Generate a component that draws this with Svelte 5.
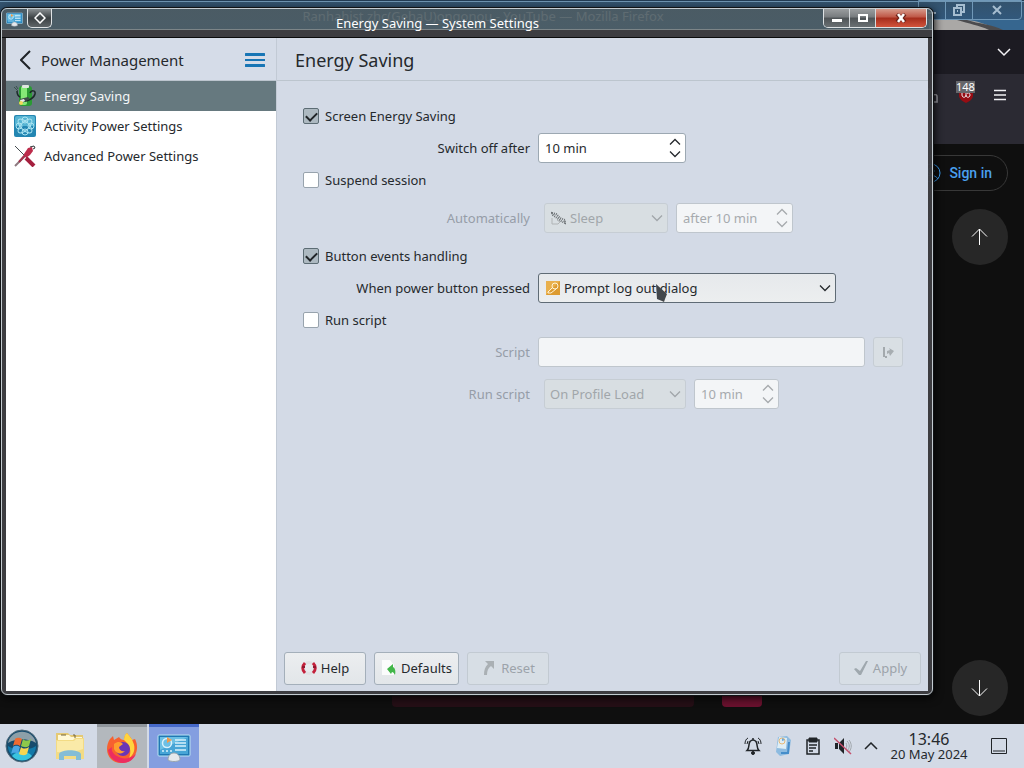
<script lang="ts">
	type Page = 'energy' | 'activity' | 'advanced';

	const pages: { id: Page; label: string }[] = [
		{ id: 'energy', label: 'Energy Saving' },
		{ id: 'activity', label: 'Activity Power Settings' },
		{ id: 'advanced', label: 'Advanced Power Settings' }
	];

	let current: Page = $state('energy');
	let screenSaving = $state(true);
	let suspend = $state(false);
	let buttonEvents = $state(true);
	let runScript = $state(false);
	let minutes = $state(10);
	let suspendMinutes = $state(10);
	let scriptMinutes = $state(10);
</script>

{#snippet chevron()}
	<svg class="chevron" viewBox="0 0 12 8" width="12" height="8" aria-hidden="true"><path d="M1 1.5l5 5 5-5" /></svg>
{/snippet}

{#snippet spin(id: string, text: string, size: string, enabled: boolean, step: (n: number) => void)}
	<div class="spin {size}" class:disabled={!enabled}>
		<input {id} type="text" value={text} disabled={!enabled} />
		<div class="steps">
			<button type="button" aria-label="Increase" disabled={!enabled} onclick={() => step(1)}>
				<svg viewBox="0 0 12 8" width="12" height="8"><path d="M1 6.5l5-5 5 5" /></svg>
			</button>
			<button type="button" aria-label="Decrease" disabled={!enabled} onclick={() => step(-1)}>
				<svg viewBox="0 0 12 8" width="12" height="8"><path d="M1 1.5l5 5 5-5" /></svg>
			</button>
		</div>
	</div>
{/snippet}

{#snippet monitor(size: number)}
	<svg viewBox="0 0 34 28" width={size} height={size} aria-hidden="true">
		<rect x="1" y="1" width="32" height="21" rx="1" fill="#1f78b4" stroke="#b9e2f2" />
		<rect x="3" y="3" width="28" height="17" fill="#47a5d6" />
		<path d="M3 3h28L3 16z" fill="#6cc0e4" />
		<circle cx="10" cy="9" r="4.5" fill="none" stroke="#d8f1fb" stroke-width="1.5" />
		<path d="M10 9V3l5 3z" fill="#f09a4a" />
		<path d="M18 6h11M18 9h11M18 12h11M18 16h11M5 17h2M9 17h2M13 17h2" stroke="#d8f1fb" stroke-width="1.5" />
		<path d="M11 26c0-5 3-7 6-7s6 2 6 7c-3 2-9 2-12 0z" fill="#e4e8ec" stroke="#9aa5ad" />
	</svg>
{/snippet}

<div class="desktop">
	<main class="workspace">
		<section class="browser" aria-label="Mozilla Firefox">
			<div class="browser-title">
				<span>Ranhahist zhc(GehaU)ongonou - YouTube — Mozilla Firefox</span>
				<div class="browser-controls">
					<button aria-label="Minimize"><svg viewBox="0 0 12 12" width="12" height="12"><path d="M2 9h8" /></svg></button>
					<button aria-label="Restore"><svg viewBox="0 0 12 12" width="12" height="12"><path d="M4 3V1h7v7H9M1 4h7v7H1zM4 7h1" /></svg></button>
					<button class="wide" aria-label="Close"><svg viewBox="0 0 12 12" width="12" height="12"><path d="M2 2l8 8M10 2l-8 8" /></svg></button>
				</div>
			</div>
			<div class="persona">
				<svg viewBox="0 0 95 10" width="95" height="10" aria-hidden="true">
					<path d="M0 0h34c14 0 24 5 38 10H0z" fill="#aaa8a6" />
					<path d="M28 0h10c12 4 24 4 36 10H60C50 5 40 4 28 0z" fill="#4b4b4e" />
				</svg>
			</div>
			<div class="tabs">
				<button aria-label="List all tabs"><svg viewBox="0 0 14 9" width="14" height="9"><path d="M1 1l6 6 6-6" /></svg></button>
			</div>
			<div class="toolbar">
				<svg class="puzzle" viewBox="0 0 16 16" width="16" height="16" aria-hidden="true"><path d="M1 15V5h3c-1-4 5-4 5 0h1v3c5-1 5 0 5 2v5z" /></svg>
				<button class="blocker" aria-label="Content blocker">
					<svg viewBox="0 0 16 16" width="16" height="16"><path d="M8 0l7 2v6c0 4-3 6-7 8-4-2-7-4-7-8V2z" /><path class="mark" d="M4 6v2c0 3 4 3 4 0V6M8 8c0 3 4 3 4 0s-3-2-3-1" /></svg>
					<span>148</span>
				</button>
				<button aria-label="Open menu"><svg viewBox="0 0 12 12" width="12" height="12"><path d="M0 1.5h12M0 6h12M0 10.5h12" /></svg></button>
			</div>
			<div class="video-page">
				<a class="sign-in" href="#signin">
					<svg viewBox="0 0 20 20" width="20" height="20" aria-hidden="true"><circle cx="10" cy="10" r="9" /><circle cx="10" cy="8" r="3" /><path d="M3 16c3-5 11-5 14 0" /></svg>
					Sign in
				</a>
				<button class="round" aria-label="Previous video"><svg viewBox="0 0 18 18" width="18" height="18"><path d="M8.5 17V1M1 8.5L8.500 1 16 8.500" /></svg></button>
				<button class="round last" aria-label="Next video"><svg viewBox="0 0 18 18" width="18" height="18"><path d="M8.5 1v16M1 9.500L8.500 17 16 9.500" /></svg></button>
			</div>
			<div class="glow strip"></div>
			<div class="glow chip"></div>
		</section>

		<section class="window" aria-label="System Settings">
			<header class="titlebar">
				<div class="title-left">
					<span class="app-icon">{@render monitor(17)}</span>
					<button class="pin" aria-label="On all desktops"><svg viewBox="0 0 12 12" width="12" height="12"><path d="M6 1l5 5-5 5-5-5z" /></svg></button>
				</div>
				<h1>Energy Saving — System Settings</h1>
				<div class="controls">
					<button aria-label="Minimize"><svg viewBox="0 0 12 10" width="12" height="10"><path d="M1 6h10v3H1z" fill="#fff" /></svg></button>
					<button aria-label="Maximize"><svg viewBox="0 0 12 10" width="12" height="10"><path d="M2 2h8v6H2z" fill="none" stroke="#fff" stroke-width="2" /></svg></button>
					<button class="close" aria-label="Close"><svg viewBox="0 0 12 10" width="12" height="10"><path d="M2 1l8 8M10 1L2 9" stroke="#6a2018" stroke-width="4" /><path d="M3 1l6 8M9 1L3 9" stroke="#fff" stroke-width="2.500" /></svg></button>
				</div>
			</header>

			<div class="content">
				<aside>
					<div class="side-head">
						<button class="back"><svg viewBox="0 0 12 20" width="12" height="20" aria-hidden="true"><path d="M10 1L1 10l9 9" /></svg>Power Management</button>
						<button class="burger" aria-label="Menu"><svg viewBox="0 0 20 14" width="20" height="14"><path d="M1 1.500h18M1 12.500h18" stroke-width="3" stroke-linecap="round" /><path d="M0 7h20" stroke-width="2" /></svg></button>
					</div>
					<nav>
						{#each pages as page (page.id)}
							<button class="page" class:selected={current === page.id} onclick={() => (current = page.id)}>
								<svg viewBox="0 0 22 22" width="22" height="22" aria-hidden="true">
									{#if page.id === 'energy'}
										<rect x="5" y="1" width="13" height="20" rx="3" fill="#2a9a33" />
										<rect x="7" y="1" width="6" height="19" rx="2" fill="#86e877" />
										<rect x="8" y="0" width="7" height="3" rx="1" fill="#dfe8df" />
										<path d="M0 2l4 4M2 1l2 3" fill="none" stroke="#39504e" />
										<path d="M3 6c0 3 1 5 3 6M8 16c6 1 12-3 13-7 1-4-4-4-5-1" fill="none" stroke="#1c2a28" stroke-width="1.500" />
										<path d="M6 14l8-2 2 2-8 4z" fill="#3e4a48" />
										<path d="M6 15l4-1 1 2-4 2z" fill="#e8ece8" />
										<circle cx="7" cy="18" r="2" fill="#f3d85a" />
									{:else if page.id === 'activity'}
										<rect width="22" height="22" rx="2" fill="#2386b2" />
										<rect x="1" y="1" width="20" height="10" rx="2" fill="#56b4d3" />
										<g fill="none" stroke="#a9e3f1">
											<ellipse cx="11" cy="11" rx="9" ry="4" transform="rotate(45 11 11)" />
											<ellipse cx="11" cy="11" rx="9" ry="4" transform="rotate(-45 11 11)" />
											<circle cx="11" cy="5" r="3" />
											<circle cx="11" cy="17" r="3" />
											<circle cx="5" cy="11" r="3" />
											<circle cx="17" cy="11" r="3" />
										</g>
									{:else}
										<path d="M1 1l12 12" stroke="#444c50" />
										<path d="M12 13l8 8" stroke="#a51f3e" stroke-width="4" />
										<path d="M1 21L13 9" stroke="#8d7a80" stroke-width="2" />
										<path d="M5 17l7-8" stroke="#a5304a" stroke-width="2" />
										<path d="M10 9l4-6 4-1 1 4-3 4-4 3z" fill="#bd2c4b" />
										<path d="M16 2l4-1 1 2-2 1" fill="none" stroke="#32393c" />
									{/if}
								</svg>
								{page.label}
							</button>
						{/each}
					</nav>
				</aside>

				<div class="panel">
					<h2>Energy Saving</h2>
					<form onsubmit={(e) => e.preventDefault()}>
						<label class="check"><input type="checkbox" bind:checked={screenSaving} />Screen Energy Saving</label>
						<div class="row">
							<label for="switch-off">Switch off after</label>
							{@render spin('switch-off', `${minutes} min`, 'large', screenSaving, (n) => (minutes += n))}
						</div>

						<label class="check"><input type="checkbox" bind:checked={suspend} />Suspend session</label>
						<div class="row inset">
							<label for="auto" class:off={!suspend}>Automatically</label>
							<div class="select sleep">
								<select id="auto" disabled={!suspend}><option>Sleep</option></select>
								<svg class="lead" viewBox="0 0 16 16" width="16" height="16" aria-hidden="true">
									<path d="M1 3l4 1 4 4 5 2v3l-4-2-4-3-4-3z" fill="none" stroke="#6d7276" stroke-width="2" stroke-dasharray="1 1" />
									<path d="M1 8v6h6l2-2-3-2" fill="none" stroke="#b0b4b6" />
								</svg>
								{@render chevron()}
							</div>
							{@render spin('after', `after ${suspendMinutes} min`, 'medium', suspend, (n) => (suspendMinutes += n))}
						</div>

						<label class="check"><input type="checkbox" bind:checked={buttonEvents} />Button events handling</label>
						<div class="row">
							<label for="power">When power button pressed</label>
							<div class="select prompt">
								<select id="power" disabled={!buttonEvents}><option>Prompt log out dialog</option></select>
								<svg class="lead" viewBox="0 0 16 16" width="16" height="16" aria-hidden="true">
									<rect x="1" y="1" width="14" height="14" fill="#dd9b30" />
									<path d="M1 1h14L1 15z" fill="#e9b04c" />
									<circle cx="10" cy="6" r="3" fill="none" stroke="#fff3d5" />
									<path d="M8 7l-5 5v1h3l5-4" fill="none" stroke="#fff3d5" />
								</svg>
								{@render chevron()}
							</div>
						</div>

						<label class="check"><input type="checkbox" bind:checked={runScript} />Run script</label>
						<div class="row">
							<label for="script" class:off={!runScript}>Script</label>
							<input id="script" class="path" type="text" disabled={!runScript} />
							<button type="button" class="browse" aria-label="Choose script" disabled={!runScript}>
								<svg viewBox="0 0 14 14" width="14" height="14"><path d="M3 2v10M5 11v2" stroke="#a3a9ad" stroke-width="2" /><path d="M8 3l5 3-4 5-1-3-2 1V6l3-1z" fill="#a7adb1" /></svg>
							</button>
						</div>
						<div class="row inset">
							<label for="when" class:off={!runScript}>Run script</label>
							<div class="select when">
								<select id="when" disabled={!runScript}><option>On Profile Load</option></select>
								{@render chevron()}
							</div>
							{@render spin('script-after', `${scriptMinutes} min`, 'small', runScript, (n) => (scriptMinutes += n))}
						</div>
					</form>

					<footer>
						<button class="action">
							<svg viewBox="0 0 16 16" width="16" height="16" aria-hidden="true">
								<circle cx="8" cy="8" r="5.500" fill="none" stroke="#e0e1e4" stroke-width="3" />
								<path d="M4 3c-3 3-3 7 0 10M12 3c3 3 3 7 0 10" fill="none" stroke="#c3203b" stroke-width="3" />
								<path d="M1 7h3M12 7h3" stroke="#8f1930" stroke-width="2" />
							</svg>
							Help
						</button>
						<button class="action defaults">
							<svg viewBox="0 0 16 16" width="16" height="16" aria-hidden="true"><path d="M1 0h8l4 5v10H1z" fill="#fbfcfc" /><path d="M6 9l6-5v3c2 1 3 4 2 8-1-2-2-3-3-3l-1 2z" fill="#41b649" /></svg>
							Defaults
						</button>
						<button class="action" disabled>
							<svg viewBox="0 0 16 16" width="16" height="16" aria-hidden="true"><path d="M4 1h9v8l-3-3c-3 2-4 5-4 9H3c0-5 1-8 4-11z" fill="#aab0b4" /></svg>
							Reset
						</button>
						<button class="action apply" disabled>
							<svg viewBox="0 0 16 16" width="16" height="16" aria-hidden="true"><path d="M1 9l2-1 4 3 6-10h2L8 15H6z" fill="#9fa8ae" /></svg>
							Apply
						</button>
					</footer>
				</div>
			</div>
		</section>
	</main>

	<footer class="taskbar">
		<button class="task start" aria-label="Start">
			<svg viewBox="0 0 34 34" width="34" height="34">
				<circle cx="17" cy="17" r="16" fill="#164b6d" stroke="#506b7a" />
				<path d="M3 17a14 14 0 0 0 28 0c-8 5-20 5-28 0z" fill="#1279a8" />
				<path d="M7 27c5-6 15-6 20 0-5 6-15 6-20 0z" fill="#38c4df" />
				<path d="M3 14C6-1 28-1 31 14 23 9 11 9 3 14z" fill="#8c9fa8" />
				<path d="M10 10c3-2 5-1 7 0l-2 7c-2-1-4-2-7 0z" fill="#ee6a31" />
				<path d="M18 10c2 2 5 2 8 0l-2 7c-3 2-6 1-8 0z" fill="#8dc84b" />
				<path d="M8 18c3-2 5-1 7 0l-2 7c-2-1-4-2-7 0z" fill="#4aa6e4" />
				<path d="M16 18c2 2 5 2 8 0l-2 7c-3 2-6 1-8 0z" fill="#f8d651" />
			</svg>
		</button>
		<button class="task" aria-label="Files">
			<svg viewBox="0 0 30 30" width="30" height="30">
				<path d="M1 2h12l2 2h13v10H1z" fill="#e5c974" />
				<path d="M3 4h11l2 2h11v5H3z" fill="#fff8d5" />
				<path d="M18 4h2v3M6 4h5" stroke="#73653c" fill="none" />
				<path d="M1 9h17l2-2h9v21H1z" fill="#f3db84" />
				<path d="M2 10h17l2-2h7v10c-8 3-17 4-26 3z" fill="#faeaa8" />
				<path d="M4 29v-6c2-5 20-5 22 0v6h-5v-4H9v4z" fill="#84bdd6" />
			</svg>
		</button>
		<button class="task running" aria-label="Firefox">
			<svg viewBox="0 0 32 32" width="32" height="32">
				<path d="M4 7l3-3 1 4 5-3c1 2 3 3 5 3 0-3 1-5 3-7 2 3 4 4 5 7l3-1c2 4 3 9 1 14-3 7-8 10-15 10C7 31 1 25 1 17 1 13 2 10 4 7z" fill="#f7612f" />
				<path d="M18 8c0-3 1-6 3-7 2 3 5 5 6 9 3 6 1 13-4 16 3-7 1-13-5-18z" fill="#ffd43f" />
				<path d="M2 18c1 8 8 13 15 13 6 0 11-4 13-9-6 5-13 6-19 2-4-2-6-6-5-9z" fill="#ed2d60" />
				<circle cx="17" cy="17" r="7" fill="#6a35b5" />
				<path d="M8 12c4-3 7-2 9 0l-4 3c0 3 3 5 6 4-3 4-9 3-11-2z" fill="#ff9d2e" />
			</svg>
		</button>
		<button class="task active" aria-label="System Settings">{@render monitor(34)}</button>

		<div class="tray">
			<button aria-label="Notifications"><svg viewBox="0 0 18 18" width="18" height="18"><path d="M3 13.500h12c-3-3-1-6-3-9-2-2-4-2-6 0-2 3 0 6-3 9zM9 3V1" stroke-width="1.500" /><path d="M4 1C2 2 1 4 1 7M14 1c2 1 3 3 3 6M4 4L3 7M14 4l1 3" /><circle class="solid" cx="9" cy="16" r="1.500" /></svg></button>
			<button aria-label="Desktop widget">
				<svg class="colour" viewBox="0 0 18 22" width="18" height="22">
					<path d="M4 2l9-1 4 4-2 14-9 2-4-4z" fill="#8dbbe0" />
					<path d="M5 2l8 1-1 11-9-1z" fill="#dfeef5" />
					<circle cx="8" cy="6" r="3" fill="none" stroke="#e7b877" />
					<path d="M8 6V3l3 2z" fill="#6aa7d8" />
					<path d="M15 7l-1 11H7" fill="none" stroke="#458dca" stroke-width="2" />
				</svg>
			</button>
			<button aria-label="Clipboard"><svg viewBox="0 0 16 18" width="16" height="18"><path d="M2 3h12v14H2zM4 8h8M4 11h7M4 14h4" stroke-width="1.500" /><path class="solid" d="M4 1h8v4H4z" /></svg></button>
			<button aria-label="Volume muted">
				<svg class="colour" viewBox="0 0 18 18" width="18" height="18">
					<path d="M1 6h3v6H1zM5 6l5-5v16l-5-5z" fill="#202428" />
					<path d="M12 6c1 2 1 4 0 6M13 4c3 3 3 7 0 10M15 3c3 4 3 8 0 12" fill="none" stroke="#a0a6ac" />
					<path d="M0 1l17 16" stroke="#c4506c" stroke-width="1.500" />
				</svg>
			</button>
			<button class="narrow" aria-label="Show hidden icons"><svg viewBox="0 0 14 8" width="14" height="8"><path d="M1 7l6-6 6 6" stroke-width="1.500" /></svg></button>
			<div class="clock"><time>13:46</time><span>20 May 2024</span></div>
			<button class="peek" aria-label="Show desktop"><svg viewBox="0 0 18 18" width="18" height="18"><path d="M1.500 1.500h15v15h-15zM3 14h12" /></svg></button>
		</div>
	</footer>

	<svg class="pointer" viewBox="0 0 12 18" width="12" height="18" aria-hidden="true"><path d="M0 0l11 10-2 5-1 3-2-1-5-2z" fill="#43474b" /></svg>
</div>

<style>
	:global(body) {
		margin: 0;
	}

	.desktop {
		position: relative;
		display: flex;
		flex-direction: column;
		min-height: 100vh;
		font-family: 'Noto Sans', sans-serif;
		font-size: 13px;
		line-height: 18px;
		color: #25292d;
	}

	.desktop * {
		box-sizing: border-box;
	}

	button,
	input,
	select {
		font: inherit;
		color: inherit;
		margin: 0;
	}

	button {
		display: flex;
		align-items: center;
		justify-content: center;
		padding: 0;
		border: none;
		background: none;
	}

	svg {
		flex: none;
	}

	.workspace {
		position: relative;
		flex: 1;
		display: flex;
		background: #0f0f0f;
	}

	/* browser behind */
	.browser {
		position: relative;
		flex: 1;
		display: flex;
		flex-direction: column;
		overflow: hidden;
	}

	.browser-title {
		position: relative;
		height: 20px;
		background: linear-gradient(#233c54 0 1px, #7096b3 1px 2px, #34536e 2px, #31587c);
		display: flex;
		justify-content: flex-end;
	}

	.browser-title span {
		position: absolute;
		left: 0;
		right: 58px;
		top: 7px;
		text-align: center;
		color: #d5dde2;
	}

	.browser-controls {
		display: flex;
		margin-right: 2px;
		border: 1px solid #7098b8;
		border-radius: 0 0 4px 4px;
	}

	.browser-controls button {
		width: 27px;
		border-right: 1px solid #7098b8;
	}

	.browser-controls .wide {
		width: 48px;
		border: none;
	}

	.browser-controls path {
		fill: none;
		stroke: #a6bdd0;
		stroke-width: 2;
	}

	.persona {
		display: flex;
		justify-content: flex-end;
		height: 10px;
		background: #36668f;
	}

	.tabs,
	.toolbar {
		display: flex;
		align-items: center;
		justify-content: flex-end;
		background: #1c1b22;
		height: 44px;
		padding-right: 13px;
	}

	.toolbar {
		align-items: flex-start;
		gap: 18px;
		height: 70px;
		padding: 7px 18px 0 0;
		background: #2b2a33;
	}

	.tabs path,
	.toolbar path {
		fill: none;
		stroke: #f2f2f5;
		stroke-width: 1.5;
	}

	.toolbar button {
		height: 28px;
	}

	.toolbar .puzzle {
		margin-top: 6px;
	}

	.toolbar .puzzle path {
		stroke: #a3a3aa;
	}

	.blocker {
		position: relative;
		width: 20px;
	}

	.toolbar .blocker path:first-child {
		fill: #960d13;
		stroke: none;
	}

	.toolbar .blocker .mark {
		stroke-width: 1;
	}

	.blocker span {
		position: absolute;
		top: 0;
		left: 0;
		background: #66666a;
		color: #fff;
		font-size: 11px;
		line-height: 12px;
	}

	.video-page {
		flex: 1;
		display: flex;
		flex-direction: column;
		align-items: flex-end;
		padding: 11px 16px 8px;
	}

	.sign-in {
		display: flex;
		align-items: center;
		gap: 8px;
		height: 36px;
		padding: 0 15px;
		border: 1px solid #383838;
		border-radius: 18px;
		color: #4aa0ee;
		font: 500 14px Roboto, sans-serif;
		text-decoration: none;
	}

	.sign-in circle,
	.sign-in path {
		fill: none;
		stroke: #3ea6ff;
	}

	.round {
		width: 56px;
		height: 56px;
		margin-top: 18px;
		border-radius: 50%;
		background: #272727;
	}

	.round.last {
		margin-top: auto;
	}

	.round path {
		fill: none;
		stroke: #fff;
	}

	.glow {
		position: absolute;
		bottom: 17px;
		height: 16px;
		border-radius: 4px;
	}

	.strip {
		left: 392px;
		right: 330px;
		background: #250f16;
	}

	.chip {
		right: 262px;
		width: 40px;
		background: #69112e;
	}

	/* settings window */
	.window {
		position: absolute;
		inset: 8px 91px 29px 1px;
		display: flex;
		flex-direction: column;
		padding: 0 4px 3px;
		border: 1px solid #c3cbd0;
		border-radius: 6px;
		background: linear-gradient(rgba(78, 92, 98, 0.88) 0 20px, #7c8588 20px 21px, rgba(62, 62, 66, 0.97) 21px 100%);
		box-shadow: 0 0 0 1px #101214, 1px 2px 10px #000;
	}

	.titlebar {
		display: flex;
		align-items: flex-start;
		height: 29px;
		margin: 0 -4px;
		border-bottom: 1px solid #0b0c0d;
	}

	.title-left {
		display: flex;
		width: 50px;
		padding-left: 4px;
		gap: 4px;
	}

	.app-icon {
		display: flex;
		width: 17px;
		padding-top: 2px;
	}

	.pin {
		width: 25px;
		height: 19px;
		border: 1px solid #e0e3e5;
		border-top: none;
		border-radius: 0 0 5px 5px;
		background: linear-gradient(#888e91, #3b4043 50%, #5f6568);
	}

	.pin path {
		fill: none;
		stroke: #fff;
		stroke-width: 1.5;
	}

	h1 {
		flex: 1;
		margin: 0;
		padding-top: 5px;
		font-size: 13px;
		font-weight: 400;
		line-height: 18px;
		text-align: center;
		color: #fff;
	}

	.controls {
		display: flex;
		height: 19px;
		margin-right: 5px;
		border: 1px solid #dde1e3;
		border-top: none;
		border-radius: 0 0 5px 5px;
		overflow: hidden;
	}

	.controls button {
		width: 26px;
		border-right: 1px solid #d5d9dc;
		background: linear-gradient(#9a9d9f, #777b7e 45%, #4e5356 50%, #6a7073);
	}

	.controls .close {
		width: 50px;
		border: none;
		background: linear-gradient(#d69a8b, #bf5645 45%, #a42c1c 50%, #d2543b);
	}

	.content {
		flex: 1;
		display: flex;
		background: #d3dae6;
	}

	aside {
		display: flex;
		flex-direction: column;
		width: 271px;
		border-right: 1px solid #c2cad5;
		background: #fff;
	}

	.side-head {
		display: flex;
		align-items: center;
		justify-content: space-between;
		height: 43px;
		padding: 2px 11px 0 14px;
		border-bottom: 1px solid #bcc5ce;
		background: #d5dce8;
	}

	.back {
		gap: 9px;
		font-size: 15px;
	}

	.back path {
		fill: none;
		stroke: #202428;
		stroke-width: 2;
	}

	.burger path {
		stroke: #1775b5;
	}

	.page {
		justify-content: flex-start;
		gap: 8px;
		width: 100%;
		height: 30px;
		padding-left: 8px;
	}

	.page.selected {
		background: #66797f;
		color: #f4f6f7;
	}

	.panel {
		flex: 1;
		display: flex;
		flex-direction: column;
		min-width: 0;
	}

	h2 {
		height: 43px;
		margin: 0;
		padding-left: 18px;
		border-bottom: 1px solid #bcc5ce;
		font-size: 18px;
		font-weight: 400;
		line-height: 44px;
	}

	form {
		flex: 1;
		display: flex;
		flex-direction: column;
		gap: 6px;
		padding: 24px 25px 24px 26px;
	}

	.check {
		display: flex;
		align-items: center;
		align-self: flex-start;
		gap: 6px;
		height: 22px;
	}

	.check input {
		appearance: none;
		display: grid;
		place-items: center;
		width: 16px;
		height: 16px;
		border: 1px solid #98a3ad;
		border-radius: 2px;
		background: #fff;
	}

	.check input:checked {
		border-color: #5c6c74;
		background: #adb9c1;
	}

	.check input:checked::before {
		content: '';
		width: 9px;
		height: 5px;
		border: solid #202428;
		border-width: 0 0 2px 2px;
		transform: translateY(-1px) rotate(-45deg);
	}

	.row {
		display: flex;
		align-items: center;
		gap: 8px;
		height: 30px;
	}

	.row.inset {
		margin: 6px 0;
	}

	.row > label {
		width: 227px;
		text-align: right;
	}

	.row.inset > label {
		margin-right: 6px;
	}

	.row .off {
		color: #969da8;
	}

	.spin,
	.path {
		height: 30px;
		border: 1px solid #9ca8b2;
		border-radius: 3px;
		background: #fff;
	}

	.spin {
		display: flex;
	}

	.spin input {
		flex: 1;
		min-width: 0;
		padding: 0 0 0 6px;
		border: none;
		background: none;
	}

	.spin.disabled,
	.path:disabled {
		border-color: #bfc6cd;
		background: #f3f5f7;
		color: #a6aaae;
	}

	.spin.large {
		width: 148px;
	}

	.spin.medium {
		width: 117px;
	}

	.spin.small {
		width: 85px;
	}

	.steps {
		display: flex;
		flex-direction: column;
		justify-content: center;
		gap: 4px;
		padding-right: 4px;
	}

	.steps path,
	.chevron path {
		fill: none;
		stroke: currentColor;
		stroke-width: 1.3;
	}

	.select {
		display: grid;
		align-items: center;
		height: 30px;
	}

	.select > * {
		grid-area: 1 / 1;
	}

	.select select {
		appearance: none;
		width: 100%;
		height: 30px;
		padding: 0 20px 0 25px;
		border: 1px solid #5f6b75;
		border-radius: 3px;
		background: linear-gradient(#e6e9ec, #eceeef);
		opacity: 1;
	}

	.select select:disabled {
		border-color: #c6cdd4;
		background: #d8dee2;
		color: #a1a6aa;
	}

	.select select:disabled ~ .chevron {
		color: #a1a6aa;
	}

	.select .lead {
		margin-left: 7px;
		pointer-events: none;
	}

	.select .chevron {
		justify-self: end;
		margin-right: 5px;
		pointer-events: none;
	}

	.sleep {
		width: 124px;
	}

	.prompt {
		width: 298px;
	}

	.when {
		width: 142px;
	}

	.select.when select {
		padding-left: 5px;
	}

	.path {
		flex: 1;
		min-width: 0;
	}

	.browse {
		width: 30px;
		height: 30px;
		border: 1px solid #c6cdd4;
		border-radius: 3px;
		background: #d9dfe4;
	}

	.panel footer {
		display: flex;
		gap: 8px;
		padding: 0 7px 6px;
	}

	.action {
		gap: 4px;
		width: 82px;
		height: 33px;
		padding-bottom: 2px;
		border: 1px solid #a4afba;
		border-radius: 3px;
		background: linear-gradient(#eceef0, #e2e6e9);
	}

	.action.defaults {
		width: 85px;
	}

	.action:disabled {
		border-color: #c2cad2;
		background: #d7dee5;
		color: #9ca3aa;
	}

	.action.apply {
		margin-left: auto;
	}

	/* panel */
	.taskbar {
		display: flex;
		height: 44px;
		background: #d3dae6;
	}

	.task {
		width: 50px;
		margin-right: 2px;
	}

	.task.start {
		width: 43px;
	}

	.task.running {
		border-top: 3px solid #8f959b;
		background: #b3b8bd;
	}

	.task.active {
		border-top: 3px solid #4669c9;
		background: #849ee0;
	}

	.tray {
		display: flex;
		align-items: center;
		margin-left: auto;
	}

	.tray button {
		width: 30px;
		height: 44px;
	}

	.tray .narrow {
		width: 26px;
	}

	.tray svg {
		fill: none;
		stroke: #202428;
	}

	.tray .colour {
		stroke: none;
	}

	.tray .solid {
		fill: #202428;
	}

	.clock {
		display: flex;
		flex-direction: column;
		align-items: center;
		width: 90px;
	}

	.clock time {
		font-size: 16px;
		line-height: 16px;
	}

	.clock span {
		line-height: 14px;
	}

	.tray .peek {
		width: 50px;
	}

	/* mouse pointer */
	.pointer {
		position: absolute;
		left: 656px;
		top: 284px;
		pointer-events: none;
	}
</style>
